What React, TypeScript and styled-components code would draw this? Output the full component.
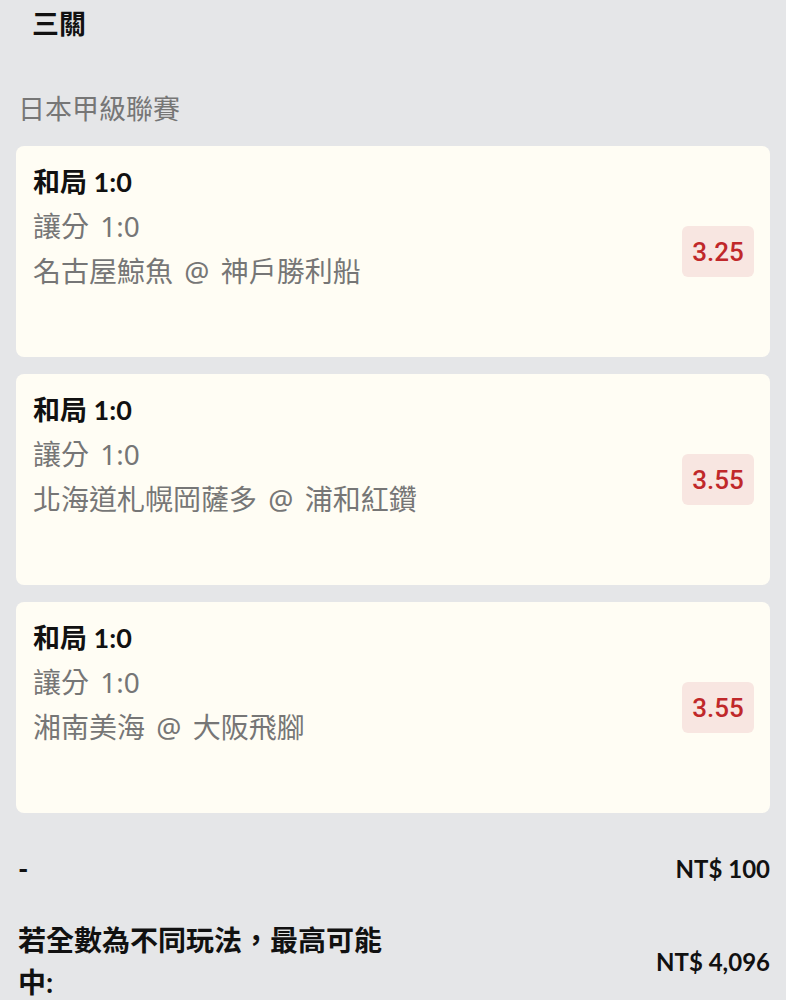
import styled, { createGlobalStyle } from "styled-components";

const GlobalStyle = createGlobalStyle`
  html, body {
    margin: 0;
    padding: 0;
    background: #e5e6e8;
  }
  body {
    font-family: Lato, "Noto Sans CJK TC", sans-serif;
    color: #111;
  }
`;

const bets = [
  { match: "名古屋鯨魚 @ 神戶勝利船", odds: "3.25" },
  { match: "北海道札幌岡薩多 @ 浦和紅鑽", odds: "3.55" },
  { match: "湘南美海 @ 大阪飛腳", odds: "3.55" },
];

export default function App() {
  return (
    <Page>
      <GlobalStyle />
      <Title>三關</Title>
      <League>日本甲級聯賽</League>
      <CardList>
        {bets.map((bet, i) => (
          <Card key={i}>
            <Info>
              <Pick>和局 1:0</Pick>
              <SubLine>讓分 1:0</SubLine>
              <SubLine>{bet.match}</SubLine>
            </Info>
            <Odds>{bet.odds}</Odds>
          </Card>
        ))}
      </CardList>
      <Summary>
        <SummaryRow>
          <Label>-</Label>
          <Amount>NT$ 100</Amount>
        </SummaryRow>
        <SummaryRow>
          <Label>若全數為不同玩法，最高可能中:</Label>
          <Amount>NT$ 4,096</Amount>
        </SummaryRow>
      </Summary>
    </Page>
  );
}

const Page = styled.div`
  width: 786px;
  height: 1000px;
  overflow: hidden;
  box-sizing: border-box;
  padding: 0 16px;
`;

const Title = styled.h1`
  margin: 0;
  padding: 8px 0 0 16px;
  font-size: 27px;
  line-height: 32px;
  font-weight: 700;
`;

const League = styled.h2`
  margin: 0;
  padding: 53px 0 0 2px;
  font-family: "Noto Sans", "Noto Sans CJK TC", sans-serif;
  font-size: 27px;
  line-height: 32px;
  font-weight: 400;
  color: #767676;
`;

const CardList = styled.div`
  display: flex;
  flex-direction: column;
  gap: 17px;
  margin-top: 21px;
`;

const Card = styled.div`
  display: flex;
  align-items: flex-start;
  justify-content: space-between;
  height: 211px;
  box-sizing: border-box;
  padding: 14px 16px 0 17px;
  background: #fffdf4;
  border-radius: 8px;
`;

const Info = styled.div`
  display: flex;
  flex-direction: column;
`;

const Pick = styled.div`
  font-size: 27px;
  line-height: 44px;
  font-weight: 700;
  color: #111;
`;

const SubLine = styled.div`
  font-family: "Noto Sans", "Noto Sans CJK TC", sans-serif;
  font-size: 28px;
  line-height: 45px;
  word-spacing: 4px;
  color: #767676;
`;

const Odds = styled.div`
  margin-top: 66px;
  width: 72px;
  height: 51px;
  display: flex;
  align-items: center;
  justify-content: center;
  border-radius: 6px;
  background: #f8e6e1;
  color: #c0282a;
  font-family: Roboto, sans-serif;
  font-size: 26px;
  font-weight: 500;
`;

const Summary = styled.div`
  display: flex;
  flex-direction: column;
  gap: 30px;
  margin-top: 34px;
  padding-left: 2px;
`;

const SummaryRow = styled.div`
  display: flex;
  align-items: center;
  justify-content: space-between;
`;

const Label = styled.div`
  max-width: 370px;
  font-size: 28px;
  line-height: 42px;
  font-weight: 700;
`;

const Amount = styled.div`
  font-size: 24px;
  font-weight: 700;
`;
